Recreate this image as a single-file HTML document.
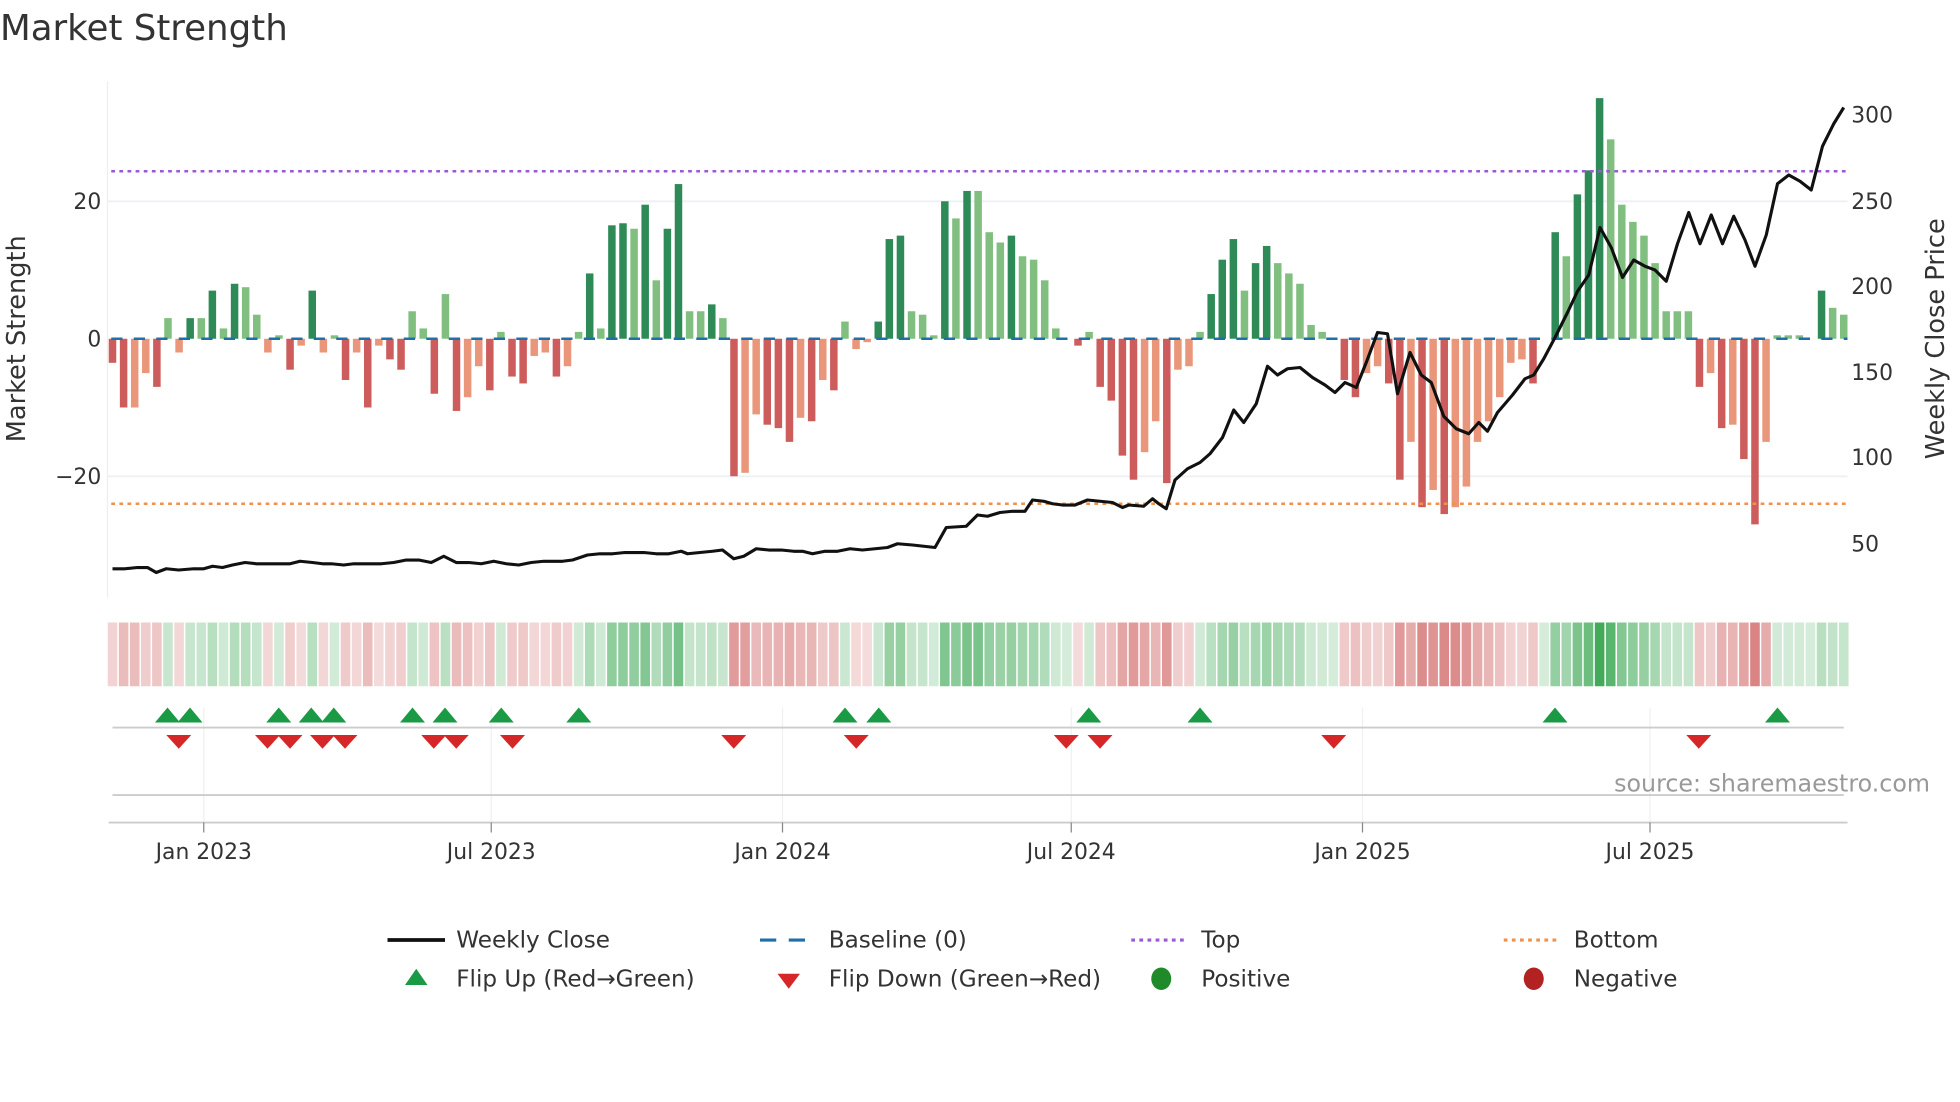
<!DOCTYPE html>
<html><head><meta charset="utf-8"><style>
html,body{margin:0;padding:0;background:#fff;}
svg{display:block;font-family:"DejaVu Sans","Liberation Sans",sans-serif;}
</style></head><body>
<svg id="s" width="1960" height="1102" viewBox="0 0 1568 881.6" xmlns="http://www.w3.org/2000/svg">
<rect width="1568" height="882" fill="#fff"/>
<text x="0" y="32" font-size="28.5" fill="#333">Market Strength</text>
<line x1="86" y1="65" x2="86" y2="478" stroke="#eee" stroke-width="1"/>
<line x1="86" y1="161" x2="1478" y2="161" stroke="#eef0f3" stroke-width="1.5"/>
<line x1="86" y1="381" x2="1478" y2="381" stroke="#eef0f3" stroke-width="1.5"/>
<g id="bars"></g>
<g id="heat"></g>
<line x1="89" y1="271" x2="1478" y2="271" stroke="#1f6fa8" stroke-width="2" stroke-dasharray="9,9"/>
<line x1="89" y1="137" x2="1478" y2="137" stroke="#9b59d6" stroke-width="2" stroke-dasharray="3,3.5"/>
<line x1="89" y1="403" x2="1478" y2="403" stroke="#f0924a" stroke-width="2" stroke-dasharray="3,3.5"/>
<polyline id="price" fill="none" stroke="#111" stroke-width="2.5" stroke-linejoin="round"/>
<g font-size="17.5" fill="#333" text-anchor="end">
<text x="81" y="167">20</text><text x="81" y="277">0</text><text x="81" y="387">−20</text>
</g>
<g font-size="17.5" fill="#333">
<text x="1481" y="98">300</text><text x="1481" y="167">250</text><text x="1481" y="235">200</text>
<text x="1481" y="304">150</text><text x="1481" y="372">100</text><text x="1481" y="441">50</text>
</g>
<text transform="translate(20,271) rotate(-90)" text-anchor="middle" font-size="20.5" fill="#333">Market Strength</text>
<text transform="translate(1555,271) rotate(-90)" text-anchor="middle" font-size="20.5" fill="#333">Weekly Close Price</text>
<g stroke="#eef0f3" stroke-width="1">
<line x1="163" y1="566" x2="163" y2="658"/><line x1="393" y1="566" x2="393" y2="658"/>
<line x1="626" y1="566" x2="626" y2="658"/><line x1="857" y1="566" x2="857" y2="658"/>
<line x1="1090" y1="566" x2="1090" y2="658"/><line x1="1320" y1="566" x2="1320" y2="658"/>
</g>
<line x1="90" y1="582" x2="1475" y2="582" stroke="#ccc" stroke-width="1.5"/>
<line x1="90" y1="636" x2="1475" y2="636" stroke="#ccc" stroke-width="1.5"/>
<line x1="87" y1="658" x2="1478" y2="658" stroke="#ccc" stroke-width="1.5"/>
<g stroke="#888" stroke-width="1">
<line x1="163" y1="658" x2="163" y2="666"/><line x1="393" y1="658" x2="393" y2="666"/>
<line x1="626" y1="658" x2="626" y2="666"/><line x1="857" y1="658" x2="857" y2="666"/>
<line x1="1090" y1="658" x2="1090" y2="666"/><line x1="1320" y1="658" x2="1320" y2="666"/>
</g>
<g id="flips"></g>
<g font-size="17.5" fill="#333" text-anchor="middle">
<text x="163" y="687">Jan 2023</text><text x="393" y="687">Jul 2023</text><text x="626" y="687">Jan 2024</text>
<text x="857" y="687">Jul 2024</text><text x="1090" y="687">Jan 2025</text><text x="1320" y="687">Jul 2025</text>
</g>
<text x="1544" y="633" text-anchor="end" font-size="19" fill="#999">source: sharemaestro.com</text>
<g font-size="18.5" fill="#333">
<line x1="310" y1="752" x2="356" y2="752" stroke="#111" stroke-width="3"/>
<text x="365" y="758">Weekly Close</text>
<line x1="608" y1="752" x2="652" y2="752" stroke="#1f6fa8" stroke-width="2.5" stroke-dasharray="13,10"/>
<text x="663" y="758">Baseline (0)</text>
<line x1="905" y1="752" x2="950" y2="752" stroke="#9b59d6" stroke-width="2.5" stroke-dasharray="3,3.5"/>
<text x="961" y="758">Top</text>
<line x1="1203" y1="752" x2="1248" y2="752" stroke="#f0924a" stroke-width="2.5" stroke-dasharray="3,3.5"/>
<text x="1259" y="758">Bottom</text>
<polygon points="333,775 342,788 324,788" fill="#1a9a45"/>
<text x="365" y="789">Flip Up (Red→Green)</text>
<polygon points="622,779 640,779 631,791" fill="#d62728"/>
<text x="663" y="789">Flip Down (Green→Red)</text>
<ellipse cx="929" cy="783" rx="8" ry="9" fill="#1f8a2a"/>
<text x="961" y="789">Positive</text>
<ellipse cx="1227" cy="783" rx="8" ry="9" fill="#b22222"/>
<text x="1259" y="789">Negative</text>
</g>
</svg>
<script>
var V=[-3.5,-10,-10,-5,-7,3,-2,3,3,7,1.5,8,7.5,3.5,-2,0.5,-4.5,-1,7,-2,0.5,-6,-2,-10,-1,-3,-4.5,4,1.5,-8,6.5,-10.5,-8.5,-4,-7.5,1,-5.5,-6.5,-2.5,-2,-5.5,-4,1,9.5,1.5,16.5,16.8,16,19.5,8.5,16,22.5,4,4,5,3,-20,-19.5,-11,-12.5,-13,-15,-11.5,-12,-6,-7.5,2.5,-1.5,-0.5,2.5,14.5,15,4,3.5,0.5,20,17.5,21.5,21.5,15.5,14,15,12,11.5,8.5,1.5,0,-1,1,-7,-9,-17,-20.5,-16.5,-12,-21,-4.5,-4,1,6.5,11.5,14.5,7,11,13.5,11,9.5,8,2,1,0,-6,-8.5,-5,-4,-6.5,-20.5,-15,-24.5,-22,-25.5,-24.5,-21.5,-15,-12,-8.5,-3.5,-3,-6.5,0,15.5,12,21,24.5,35,29,19.5,17,15,11,4,4,4,-7,-5,-13,-12.5,-17.5,-27,-15,0.5,0.5,0.5,0,7,4.5,3.5];
var NS="http://www.w3.org/2000/svg";
function el(t,a,p){var e=document.createElementNS(NS,t);for(var k in a)e.setAttribute(k,a[k]);p.appendChild(e);return e;}
var bars=document.getElementById('bars'),heat=document.getElementById('heat');
var n=V.length,x0=90,dx=(1475-90)/(n-1);
for(var i=0;i<n;i++){
 var v=V[i],p=i?V[i-1]:0,x=x0+i*dx,h=Math.abs(v)*5.5;
 var dark=Math.abs(v)>Math.abs(p)+0.01;
 var c=v>=0?(dark?'#2e8b57':'#80bf80'):(dark?'#cd5c5c':'#e9967a');
 if(h>0.3) el('rect',{x:x-3,y:v>=0?271-h:271,width:6,height:h,fill:c},bars);
 var a=0.2+0.7*Math.min(Math.abs(v),35)/35;
 var hc=v>=0?'rgba(44,160,70,'+a+')':'rgba(200,70,70,'+(a*0.9)+')';
 el('rect',{x:x-dx/2+0.6,y:498,width:dx-1.2,height:51,fill:hc},heat);
}
var P=[90,455,100,455,110,454,118,454,125,458,133,455,143,456,155,455,163,455,170,453,178,454,186,452,196,450,205,451,215,451,225,451,232,451,240,449,250,450,258,451,265,451,275,452,283,451,295,451,305,451,315,450,325,448,335,448,345,450,355,445,365,450,375,450,385,451,395,449,405,451,415,452,425,450,435,449,450,449,458,448,470,444,480,443,490,443,500,442,515,442,525,443,535,443,545,441,550,443,560,442,570,441,578,440,587,447,595,445,605,439,615,440,625,440,635,441,642,441,650,443,660,441,670,441,680,439,690,440,700,439,710,438,718,435,730,436,748,438,757,422,773,421,782,412,790,413,800,410,810,409,820,409,826,400,835,401,842,403,850,404,860,404,870,400,880,401,890,402,898,406,903,404,915,405,922,399,927,403,933,407,940,384,950,375,960,370,968,363,978,350,987,328,995,338,1005,323,1014,293,1022,300,1030,295,1040,294,1050,302,1060,308,1068,314,1076,306,1085,310,1093,290,1102,266,1110,267,1118,315,1128,282,1137,300,1145,306,1155,333,1165,343,1175,347,1183,338,1190,345,1198,330,1210,316,1220,303,1227,300,1235,287,1244,270,1254,250,1262,233,1271,220,1280,182,1289,198,1298,222,1307,208,1316,213,1324,216,1333,225,1342,195,1351,170,1360,195,1369,172,1378,195,1387,173,1396,192,1404,213,1413,188,1422,147,1431,140,1440,145,1449,152,1458,117,1467,99,1475,86];
var s='';for(var j=0;j<P.length;j+=2)s+=P[j]+','+P[j+1]+' ';
document.getElementById('price').setAttribute('points',s);
var F=document.getElementById('flips');
[134,152,223,249,267,330,356,401,463,676,703,871,960,1244,1422].forEach(function(x){el('polygon',{points:x+',566 '+(x+10)+',578 '+(x-10)+',578',fill:'#1a9a45'},F);});
[143,214,232,258,276,347,365,410,587,685,853,880,1067,1359].forEach(function(x){el('polygon',{points:(x-10)+',588 '+(x+10)+',588 '+x+',599',fill:'#d62728'},F);});
</script>
</body></html>
